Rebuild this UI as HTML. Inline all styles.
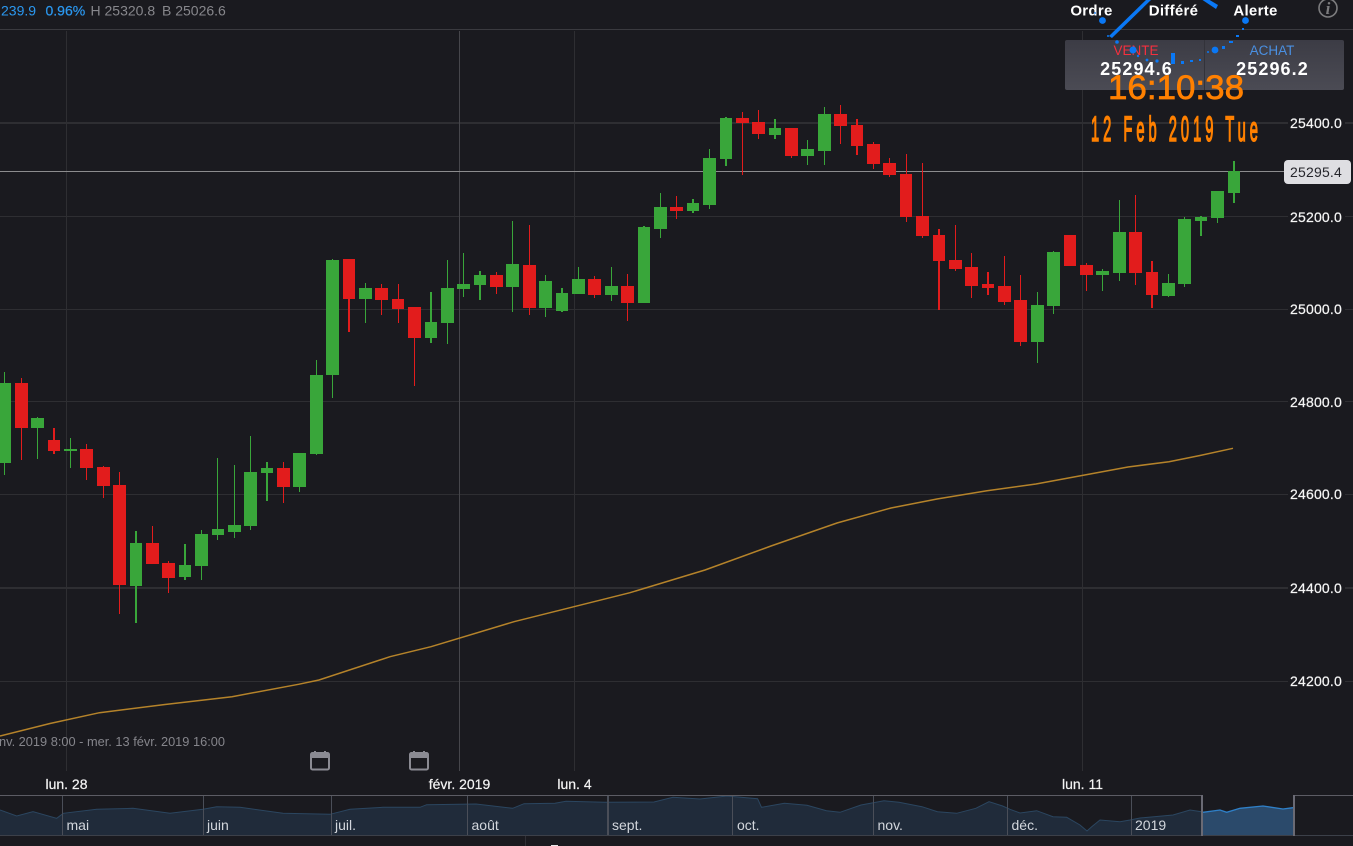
<!DOCTYPE html>
<html><head><meta charset="utf-8"><style>
html,body{margin:0;padding:0;background:#1a1a1f;overflow:hidden}
svg{display:block;font-family:"Liberation Sans",sans-serif}
</style></head><body>
<svg width="1353" height="846" viewBox="0 0 1353 846" xmlns="http://www.w3.org/2000/svg">
<rect width="1353" height="846" fill="#1a1a1f"/>
<g shape-rendering="crispEdges">
<rect x="0" y="29" width="1353" height="1" fill="#3a3a3f"/>
<g fill="#2e2e32">
<rect x="0" y="122" width="1353" height="2"/><rect x="0" y="216" width="1353" height="1"/><rect x="0" y="309" width="1353" height="1"/><rect x="0" y="401" width="1353" height="1"/><rect x="0" y="494" width="1353" height="1"/><rect x="0" y="587" width="1353" height="2"/><rect x="0" y="681" width="1353" height="1"/>
<rect x="66" y="31" width="1" height="740"/><rect x="574" y="31" width="1" height="740"/><rect x="1082" y="31" width="1" height="740"/>
</g>
<rect x="459" y="31" width="1" height="740" fill="#46464b"/>
<rect x="0" y="171" width="1285" height="1" fill="#8c8c8e"/>
<path fill="#39a63a" d="M0 383H11V463H0zM4 372H5V475H4zM31 418H44V428H31zM37 417H38V459H37zM64 449H77V451H64zM70 438H71V468H70zM130 543H142V586H130zM135 531H137V623H135zM179 565H191V577H179zM184 544H186V580H184zM195 534H208V566H195zM201 530H202V580H201zM212 529H224V535H212zM217 458H218V540H217zM228 525H241V532H228zM234 465H235V538H234zM244 472H257V526H244zM250 436H251V530H250zM261 468H273V473H261zM266 462H268V501H266zM293 453H306V487H293zM299 453H300V492H299zM310 375H323V454H310zM316 360H317V455H316zM326 260H339V375H326zM332 259H333V398H332zM359 288H372V299H359zM365 283H366V323H365zM425 322H437V338H425zM430 292H432V343H430zM441 288H454V323H441zM447 260H448V344H447zM457 284H470V289H457zM463 253H464V297H463zM474 275H486V285H474zM479 271H481V300H479zM506 264H519V287H506zM512 221H513V312H512zM539 281H552V308H539zM545 275H546V317H545zM556 293H568V311H556zM561 288H563V312H561zM572 279H585V294H572zM578 267H579V294H578zM605 286H618V295H605zM611 267H612V301H611zM638 227H650V303H638zM643 226H645V303H643zM654 207H667V229H654zM660 193H661V238H660zM687 203H699V211H687zM692 199H694V213H692zM703 158H716V205H703zM709 149H710V209H709zM720 118H732V159H720zM725 117H727V166H725zM769 128H781V135H769zM774 119H776V139H774zM801 149H814V156H801zM807 140H808V165H807zM818 114H831V151H818zM824 107H825V165H824zM1031 305H1044V342H1031zM1037 292H1038V363H1037zM1047 252H1060V306H1047zM1053 251H1054V314H1053zM1096 271H1109V275H1096zM1102 269H1103V291H1102zM1113 232H1126V273H1113zM1119 200H1120V281H1119zM1162 283H1175V296H1162zM1168 274H1169V297H1168zM1178 219H1191V284H1178zM1184 217H1185V287H1184zM1195 217H1207V221H1195zM1200 216H1202V236H1200zM1211 191H1224V218H1211zM1217 191H1218V223H1217zM1228 171H1240V193H1228zM1233 161H1235V203H1233z"/>
<path fill="#e21c1c" d="M15 383H28V428H15zM21 378H22V460H21zM48 440H60V451H48zM53 428H55V454H53zM80 449H93V468H80zM86 444H87V480H86zM97 467H110V486H97zM103 466H104V498H103zM113 485H126V585H113zM119 472H120V614H119zM146 543H159V564H146zM152 526H153V564H152zM162 563H175V578H162zM168 561H169V593H168zM277 468H290V487H277zM283 462H284V503H283zM343 259H355V299H343zM348 259H350V332H348zM375 288H388V300H375zM381 284H382V315H381zM392 299H404V309H392zM398 284H399V323H398zM408 307H421V338H408zM414 307H415V386H414zM490 275H503V287H490zM496 272H497V294H496zM523 265H536V308H523zM529 225H530V315H529zM588 279H601V295H588zM594 276H595V298H594zM621 286H634V303H621zM627 274H628V321H627zM670 207H683V211H670zM676 196H677V219H676zM736 118H749V123H736zM742 112H743V175H742zM752 122H765V134H752zM758 110H759V139H758zM785 128H798V156H785zM791 128H792V158H791zM834 114H847V126H834zM840 105H841V144H840zM851 125H863V146H851zM856 119H858V155H856zM867 144H880V164H867zM873 142H874V169H873zM883 163H896V175H883zM889 158H890V177H889zM900 174H912V217H900zM906 154H907V222H906zM916 216H929V236H916zM922 163H923V238H922zM933 235H945V261H933zM938 229H940V310H938zM949 260H962V269H949zM955 225H956V271H955zM965 267H978V286H965zM971 253H972V298H971zM982 284H994V288H982zM987 272H989V295H987zM998 286H1011V302H998zM1004 256H1005V305H1004zM1014 300H1027V342H1014zM1020 275H1021V346H1020zM1064 235H1076V266H1064zM1080 265H1093V275H1080zM1086 263H1087V291H1086zM1129 232H1142V273H1129zM1135 195H1136V285H1135zM1146 272H1158V295H1146zM1151 261H1153V308H1151z"/>
</g>
<polyline fill="none" stroke="#b5832a" stroke-width="1.5" points="0,736 50,723.5 99.5,712.7 165,704.5 232,696.7 298.5,684.3 319,680 390,656.7 431,646.7 514,621.7 630,592.7 705,570 771,546 837,523 891,508 937,499 987,490.7 1036,484 1128,467 1169,461.7 1200,455.5 1233,448.3"/>

<!-- price axis -->
<g shape-rendering="crispEdges" fill="#1a1a1f">
<rect x="1288" y="114" width="57" height="18"/><rect x="1288" y="208" width="57" height="18"/><rect x="1288" y="300" width="57" height="18"/><rect x="1288" y="393" width="57" height="18"/><rect x="1288" y="485" width="57" height="18"/><rect x="1288" y="579" width="57" height="18"/><rect x="1288" y="672" width="57" height="18"/>
</g>
<g font-size="14" fill="#f6f6f6" text-anchor="end" letter-spacing=".2" stroke="#f6f6f6" stroke-width=".2">
<text x="1342" y="128">25400.0</text><text x="1342" y="222">25200.0</text><text x="1342" y="314">25000.0</text><text x="1342" y="407">24800.0</text><text x="1342" y="499">24600.0</text><text x="1342" y="593">24400.0</text><text x="1342" y="686">24200.0</text>
</g>
<rect x="1284" y="160" width="67" height="24" rx="4" fill="#dedee2"/>
<text x="1290" y="177" font-size="14" fill="#26262c" letter-spacing=".2">25295.4</text>

<!-- header -->
<text x="1" y="15.5" font-size="14" fill="#2b98f0">239.9</text>
<text x="45.5" y="15.5" font-size="14" fill="#2b98f0" stroke="#2b98f0" stroke-width=".2">0.96%</text>
<text x="90.5" y="15.5" font-size="14" fill="#87878c">H 25320.8</text>
<text x="162" y="15.5" font-size="14" fill="#87878c">B 25026.6</text>
<g font-size="15" font-weight="bold" fill="#fff" text-anchor="middle">
<text x="1091.5" y="15.5" letter-spacing=".3">Ordre</text><text x="1173.5" y="15.5" letter-spacing=".3">Différé</text><text x="1255.5" y="15.5" letter-spacing=".3">Alerte</text>
</g>
<circle cx="1328" cy="8" r="9" fill="none" stroke="#7c7c7e" stroke-width="1.6"/>
<text x="1328" y="14" font-size="17" font-style="italic" font-weight="bold" font-family="Liberation Serif,serif" fill="#7c7c7e" text-anchor="middle">i</text>

<!-- bid/ask -->
<defs><linearGradient id="pg" x1="0" y1="0" x2="0" y2="1"><stop offset="0" stop-color="#3c3c45"/><stop offset="1" stop-color="#4b4b54"/></linearGradient></defs>
<rect x="1065" y="40" width="279" height="50" rx="2" fill="url(#pg)"/>
<rect x="1204" y="40" width="1" height="50" fill="#33333a" shape-rendering="crispEdges"/>
<text x="1136" y="55" font-size="13.5" fill="#f5303f" text-anchor="middle">VENTE</text>
<text x="1272" y="55" font-size="13.5" fill="#4a90e2" text-anchor="middle">ACHAT</text>
<text x="1136.5" y="75" font-size="18" font-weight="bold" fill="#fff" text-anchor="middle" letter-spacing="1.1">25294.6</text>
<text x="1272.5" y="75" font-size="18" font-weight="bold" fill="#fff" text-anchor="middle" letter-spacing="1.1">25296.2</text>

<!-- blue strokes -->
<g fill="#0a78f5">
<path d="M1109 36L1147 -1L1151 0L1112 38z"/>
<path d="M1201 -1L1208 -1L1218 5L1216 9z"/>
<circle cx="1102.5" cy="20.5" r="3.4"/><circle cx="1095" cy="13" r=".9"/><circle cx="1108" cy="36" r="1"/><circle cx="1117" cy="42" r="1.8"/><circle cx="1133" cy="50" r="3.5"/><circle cx="1138" cy="56" r="1.2"/><circle cx="1147" cy="60" r="1.4"/><circle cx="1157" cy="61" r="1.6"/>
<rect x="1171" y="53" width="4" height="11"/><rect x="1181" y="61" width="3" height="3"/><rect x="1190" y="60" width="3" height="2"/><rect x="1199" y="59" width="2" height="2"/>
<circle cx="1208" cy="52" r="1"/><circle cx="1215" cy="50" r="3.4"/><rect x="1222" y="46" width="3" height="3"/><rect x="1229" y="41" width="4" height="2"/><rect x="1236" y="35" width="3" height="2"/><rect x="1242" y="28" width="2" height="2"/><circle cx="1245.5" cy="20.5" r="3.4"/>
</g>

<!-- orange clock -->
<text x="1108" y="99" font-size="34.5" fill="#ff8000" stroke="#ff8000" stroke-width=".7" textLength="136" lengthAdjust="spacingAndGlyphs">16:10:38</text>
<text transform="translate(1091,141) scale(.42,1)" font-size="35" fill="#ff8000" stroke="#ff8000" stroke-width="1.6" letter-spacing="9.5">12 Feb 2019 Tue</text>

<!-- range text -->
<text x="225" y="746" font-size="12.8" fill="#85858b" text-anchor="end">jeu. 24 janv. 2019 8:00 - mer. 13 févr. 2019 16:00</text>

<!-- calendars -->
<g fill="none">
<rect x="311" y="753" width="18" height="16.5" rx="1.5" stroke="#8b8b93" stroke-width="2"/>
<rect x="311" y="753" width="18" height="5" fill="#8b8b93"/>
<rect x="314" y="751" width="2" height="5" fill="#8b8b93"/><rect x="324" y="751" width="2" height="5" fill="#8b8b93"/>
</g>
<g fill="none">
<rect x="410" y="753" width="18" height="16.5" rx="1.5" stroke="#8b8b93" stroke-width="2"/>
<rect x="410" y="753" width="18" height="5" fill="#8b8b93"/>
<rect x="413" y="751" width="2" height="5" fill="#8b8b93"/><rect x="423" y="751" width="2" height="5" fill="#8b8b93"/>
</g>

<!-- time axis -->
<g font-size="14" fill="#f4f4f4" text-anchor="middle" stroke="#f4f4f4" stroke-width=".2">
<text x="66.5" y="789">lun. 28</text><text x="459.5" y="789">févr. 2019</text><text x="574.5" y="789">lun. 4</text><text x="1082.5" y="789">lun. 11</text>
</g>

<!-- navigator -->
<path fill="#202b3a" d="M0 835V810L16.7 816L33 811.7L56.7 818.3L63.3 813.3L96.7 809.3L133 808.3L170 813.3L203 809.3L216.7 806.7L240 807.3L283 813.3L330 814.3L350 809.3L383 807.3L420 807.3L426.7 804.7L476 804L512.7 808.3L524 803.7L555 803.3L566 801.3L604.5 802.3L654 802L673 797.3L700 799L727 796L757.6 798.7L761.5 807.3L784.4 803.3L807 805.3L826.5 810.7L840 812.3L861 805L884 800.7L899 802.3L922 806.7L937.5 811.7L956.6 813.3L975.8 808.3L989 801.7L1002.6 806L1010 809.3L1020 813L1036.7 810.7L1053 816.7L1066.7 817.3L1080 825L1087 831L1091.7 826.7L1100 820L1120 821.7L1130 820L1140 818L1173 815L1190 810L1201.7 811.7V835z"/>
<path fill="none" stroke="#2b4660" stroke-width="1" d="M0 810L16.7 816L33 811.7L56.7 818.3L63.3 813.3L96.7 809.3L133 808.3L170 813.3L203 809.3L216.7 806.7L240 807.3L283 813.3L330 814.3L350 809.3L383 807.3L420 807.3L426.7 804.7L476 804L512.7 808.3L524 803.7L555 803.3L566 801.3L604.5 802.3L654 802L673 797.3L700 799L727 796L757.6 798.7L761.5 807.3L784.4 803.3L807 805.3L826.5 810.7L840 812.3L861 805L884 800.7L899 802.3L922 806.7L937.5 811.7L956.6 813.3L975.8 808.3L989 801.7L1002.6 806L1010 809.3L1020 813L1036.7 810.7L1053 816.7L1066.7 817.3L1080 825L1087 831L1091.7 826.7L1100 820L1120 821.7L1130 820L1140 818L1173 815L1190 810L1201.7 811.7"/>
<path fill="#2b4a6b" d="M1203 835V812.3L1220 810L1226.7 812.3L1240 808.3L1263 806L1283 809L1293 807.7V835z"/>
<path fill="none" stroke="#2f80c8" stroke-width="1.3" d="M1203 812.3L1220 810L1226.7 812.3L1240 808.3L1263 806L1283 809L1293 807.7"/>
<g shape-rendering="crispEdges">
<rect x="0" y="795" width="1202" height="1" fill="#5c5c64"/><rect x="1294" y="795" width="59" height="1" fill="#5c5c64"/>
<rect x="0" y="835" width="1353" height="1" fill="#3c4049"/>
<g fill="#4a4e58"><rect x="62" y="796" width="1" height="39"/><rect x="203" y="796" width="1" height="39"/><rect x="331" y="796" width="1" height="39"/><rect x="467" y="796" width="1" height="39"/><rect x="607" y="796" width="2" height="39"/><rect x="732" y="796" width="1" height="39"/><rect x="873" y="796" width="1" height="39"/><rect x="1007" y="796" width="1" height="39"/><rect x="1131" y="796" width="1" height="39"/></g>
<rect x="1201" y="795" width="2" height="41" fill="#6a6a74"/><rect x="1293" y="795" width="2" height="41" fill="#6a6a74"/>
<rect x="525" y="836" width="1" height="10" fill="#303036"/>
</g>
<g font-size="14" fill="#d2d6dc">
<text x="66.5" y="830">mai</text><text x="207" y="830">juin</text><text x="335" y="830">juil.</text><text x="471.5" y="830">août</text><text x="612" y="830">sept.</text><text x="737" y="830">oct.</text><text x="877.5" y="830">nov.</text><text x="1011.5" y="830">déc.</text><text x="1135" y="830">2019</text>
</g>
<rect x="551" y="845" width="7" height="1" fill="#e8e8e8" shape-rendering="crispEdges"/>
</svg>
</body></html>
